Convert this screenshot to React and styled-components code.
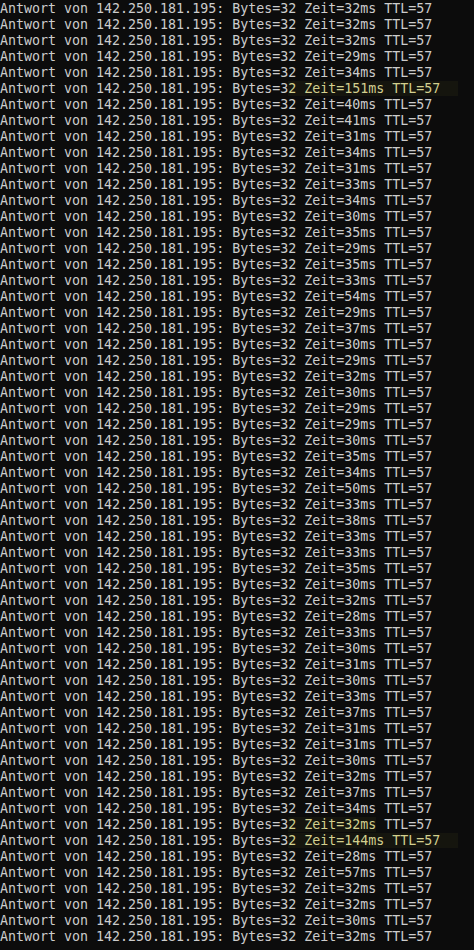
import styled, { createGlobalStyle } from "styled-components";

const GlobalStyle = createGlobalStyle`
  html, body {
    margin: 0;
    padding: 0;
    background: #0c0c0c;
  }
`;

const Console = styled.div`
  display: flex;
  flex-direction: column;
  padding: 1px 0 0 0;
  height: 950px;
  overflow: hidden;
  background: #0c0c0c;
  color: #cccccc;
  font-family: "DejaVu Sans Mono", "Liberation Mono", monospace;
  font-size: 13.3px;
  line-height: 16px;
  white-space: pre;
`;

const Line = styled.div`
  height: 16px;
`;

const Mark = styled.span`
  color: #d2cf8e;
  background: #15150e;
  padding-right: ${({ $tail }) => ($tail ? "18px" : "0")};
`;

const times = [
  32, 32, 32, 29, 34, 151, 40, 41, 31, 34, 31, 33, 34, 30, 35, 29, 35, 33, 54, 29,
  37, 30, 29, 32, 30, 29, 29, 30, 35, 34, 50, 33, 38, 33, 33, 35, 30, 32, 28, 33,
  30, 31, 30, 33, 37, 31, 31, 30, 32, 37, 34, 32, 144, 28, 57, 32, 32, 30, 32,
];

// rows with the yellow selection, 0-based; "partial" stops before TTL
const marked = { 5: "full", 51: "partial", 52: "full" };

const PREFIX = "Antwort von 142.250.181.195: Bytes=3";

const PingLine = ({ ms, mark }) => {
  if (!mark) {
    return <Line>{`${PREFIX}2 Zeit=${ms}ms TTL=57`}</Line>;
  }
  if (mark === "partial") {
    return (
      <Line>
        {PREFIX}
        <Mark>{`2 Zeit=${ms}ms`}</Mark>
        {" TTL=57"}
      </Line>
    );
  }
  return (
    <Line>
      {PREFIX}
      <Mark $tail>{`2 Zeit=${ms}ms TTL=57`}</Mark>
    </Line>
  );
};

export default function App() {
  return (
    <>
      <GlobalStyle />
      <Console>
        {times.map((ms, i) => (
          <PingLine key={i} ms={ms} mark={marked[i]} />
        ))}
      </Console>
    </>
  );
}
